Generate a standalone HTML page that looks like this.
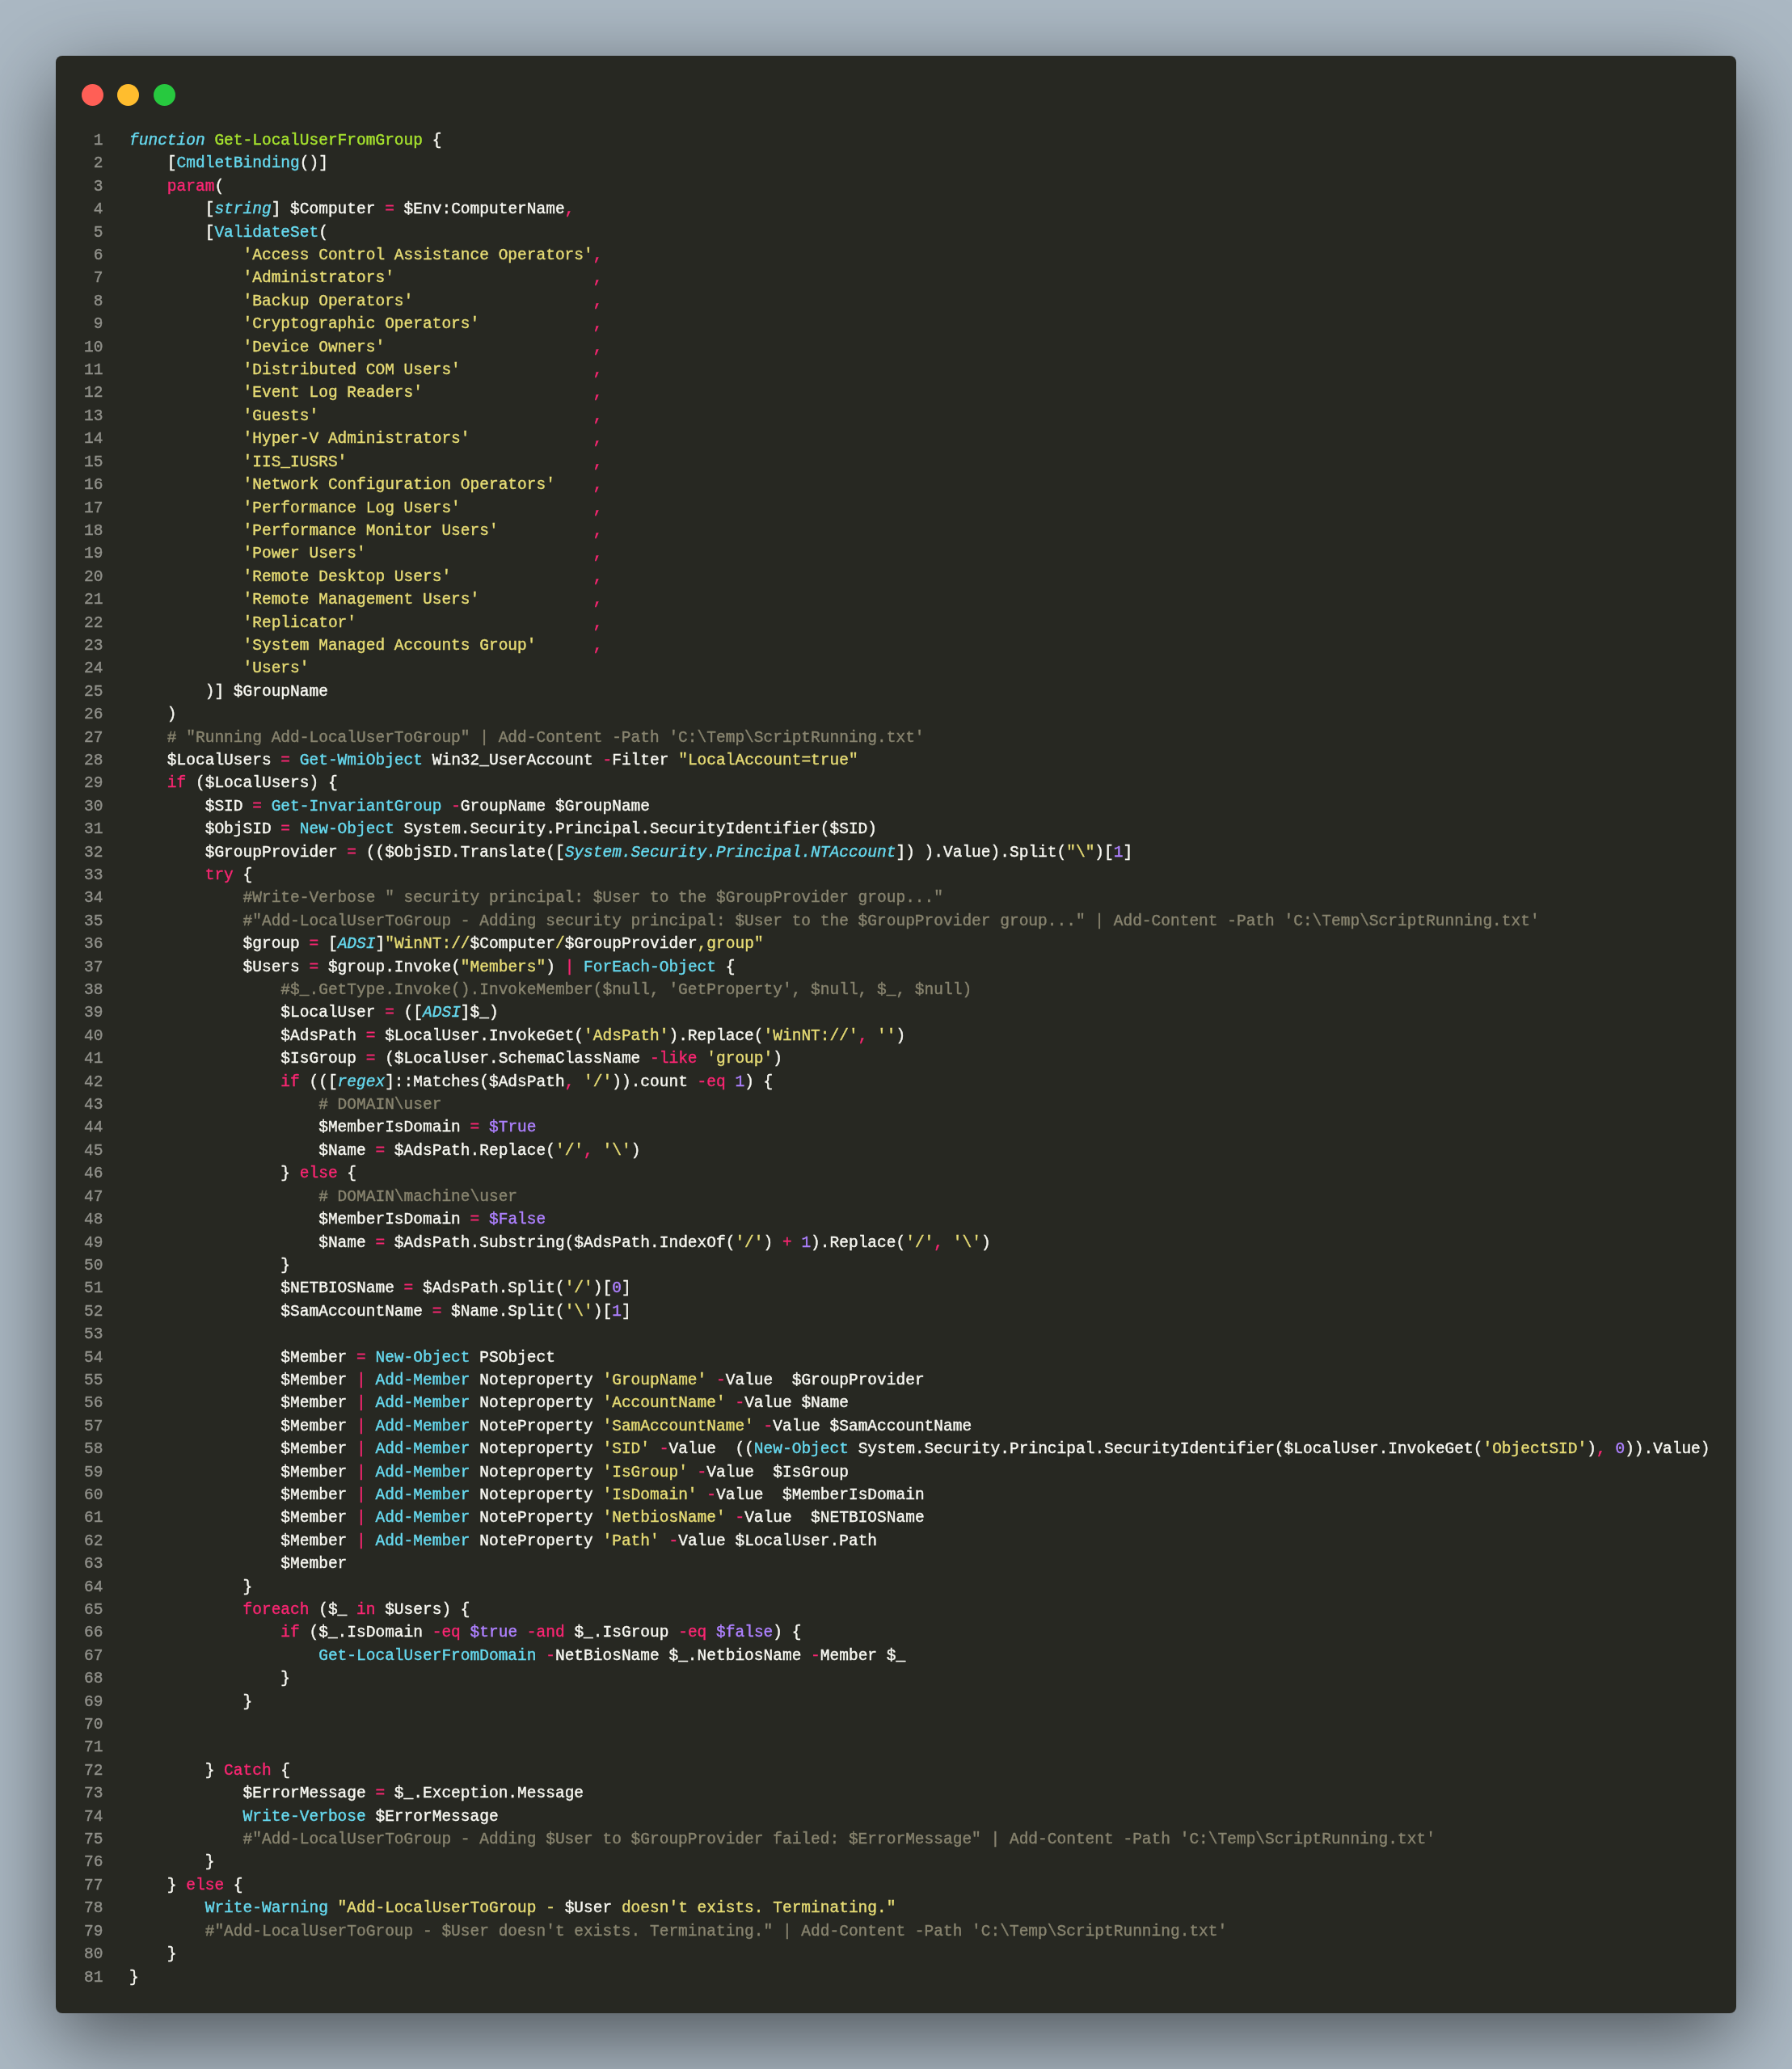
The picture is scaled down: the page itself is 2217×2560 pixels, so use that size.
<!DOCTYPE html>
<html><head><meta charset="utf-8">
<style>
html,body{margin:0;padding:0;}
body{width:2217px;height:2560px;background:#abb8c3;position:relative;overflow:hidden;}
.win{position:absolute;left:69px;top:69px;width:2079px;height:2421.5px;background:#272822;border-radius:8px;box-shadow:0 30px 103px rgba(0,0,0,0.55);}
.dot{position:absolute;top:104.2px;width:27px;height:27px;border-radius:50%;}
.d1{left:101px;background:#ff5f56;}
.d2{left:145px;background:#ffbd2e;}
.d3{left:189.7px;background:#27c93f;}
pre{margin:0;position:absolute;font-family:"Liberation Mono",monospace;font-size:19.514px;line-height:28.407px;white-space:pre;}
.code{left:159.9px;top:159.7px;color:#f8f8f2;}
.nums{right:calc(2217px - 127.5px);top:159.7px;color:#90908a;text-align:right;}
b{font-weight:normal;}
pre{will-change:transform;-webkit-text-stroke:0.4px currentColor;letter-spacing:0.007px;}
.p{color:#f92672}.c{color:#66d9ef}.ci{color:#66d9ef;font-style:italic}.g{color:#a6e22e}.y{color:#e6db74}.m{color:#ae81ff}.cm{color:#88846f}
</style></head><body>
<div class="win"></div>
<div class="dot d1"></div><div class="dot d2"></div><div class="dot d3"></div>
<pre class="nums">1
2
3
4
5
6
7
8
9
10
11
12
13
14
15
16
17
18
19
20
21
22
23
24
25
26
27
28
29
30
31
32
33
34
35
36
37
38
39
40
41
42
43
44
45
46
47
48
49
50
51
52
53
54
55
56
57
58
59
60
61
62
63
64
65
66
67
68
69
70
71
72
73
74
75
76
77
78
79
80
81</pre>
<pre class="code"><b class="ci">function</b> <b class="g">Get-LocalUserFromGroup</b> {
    [<b class="c">CmdletBinding</b>()]
    <b class="p">param</b>(
        [<b class="ci">string</b>] $Computer <b class="p">=</b> $Env:ComputerName<b class="p">,</b>
        [<b class="c">ValidateSet</b>(
            <b class="y">'Access Control Assistance Operators'</b><b class="p">,</b>
            <b class="y">'Administrators'</b>                     <b class="p">,</b>
            <b class="y">'Backup Operators'</b>                   <b class="p">,</b>
            <b class="y">'Cryptographic Operators'</b>            <b class="p">,</b>
            <b class="y">'Device Owners'</b>                      <b class="p">,</b>
            <b class="y">'Distributed COM Users'</b>              <b class="p">,</b>
            <b class="y">'Event Log Readers'</b>                  <b class="p">,</b>
            <b class="y">'Guests'</b>                             <b class="p">,</b>
            <b class="y">'Hyper-V Administrators'</b>             <b class="p">,</b>
            <b class="y">'IIS_IUSRS'</b>                          <b class="p">,</b>
            <b class="y">'Network Configuration Operators'</b>    <b class="p">,</b>
            <b class="y">'Performance Log Users'</b>              <b class="p">,</b>
            <b class="y">'Performance Monitor Users'</b>          <b class="p">,</b>
            <b class="y">'Power Users'</b>                        <b class="p">,</b>
            <b class="y">'Remote Desktop Users'</b>               <b class="p">,</b>
            <b class="y">'Remote Management Users'</b>            <b class="p">,</b>
            <b class="y">'Replicator'</b>                         <b class="p">,</b>
            <b class="y">'System Managed Accounts Group'</b>      <b class="p">,</b>
            <b class="y">'Users'</b>
        )] $GroupName
    )
    <b class="cm"># "Running Add-LocalUserToGroup" | Add-Content -Path 'C:\Temp\ScriptRunning.txt'</b>
    $LocalUsers <b class="p">=</b> <b class="c">Get-WmiObject</b> Win32_UserAccount <b class="p">-</b>Filter <b class="y">"LocalAccount=true"</b>
    <b class="p">if</b> ($LocalUsers) {
        $SID <b class="p">=</b> <b class="c">Get-InvariantGroup</b> <b class="p">-</b>GroupName $GroupName
        $ObjSID <b class="p">=</b> <b class="c">New-Object</b> System.Security.Principal.SecurityIdentifier($SID)
        $GroupProvider <b class="p">=</b> (($ObjSID.Translate([<b class="ci">System.Security.Principal.NTAccount</b>]) ).Value).Split(<b class="y">"\"</b>)[<b class="m">1</b>]
        <b class="p">try</b> {
            <b class="cm">#Write-Verbose " security principal: $User to the $GroupProvider group..."</b>
            <b class="cm">#"Add-LocalUserToGroup - Adding security principal: $User to the $GroupProvider group..." | Add-Content -Path 'C:\Temp\ScriptRunning.txt'</b>
            $group <b class="p">=</b> [<b class="ci">ADSI</b>]<b class="y">"WinNT://</b>$Computer<b class="y">/</b>$GroupProvider<b class="y">,group"</b>
            $Users <b class="p">=</b> $group.Invoke(<b class="y">"Members"</b>) <b class="p">|</b> <b class="c">ForEach-Object</b> {
                <b class="cm">#$_.GetType.Invoke().InvokeMember($null, 'GetProperty', $null, $_, $null)</b>
                $LocalUser <b class="p">=</b> ([<b class="ci">ADSI</b>]$_)
                $AdsPath <b class="p">=</b> $LocalUser.InvokeGet(<b class="y">'AdsPath'</b>).Replace(<b class="y">'WinNT://'</b><b class="p">,</b> <b class="y">''</b>)
                $IsGroup <b class="p">=</b> ($LocalUser.SchemaClassName <b class="p">-like</b> <b class="y">'group'</b>)
                <b class="p">if</b> (([<b class="ci">regex</b>]::Matches($AdsPath<b class="p">,</b> <b class="y">'/'</b>)).count <b class="p">-eq</b> <b class="m">1</b>) {
                    <b class="cm"># DOMAIN\user</b>
                    $MemberIsDomain <b class="p">=</b> <b class="m">$True</b>
                    $Name <b class="p">=</b> $AdsPath.Replace(<b class="y">'/'</b><b class="p">,</b> <b class="y">'\'</b>)
                } <b class="p">else</b> {
                    <b class="cm"># DOMAIN\machine\user</b>
                    $MemberIsDomain <b class="p">=</b> <b class="m">$False</b>
                    $Name <b class="p">=</b> $AdsPath.Substring($AdsPath.IndexOf(<b class="y">'/'</b>) <b class="p">+</b> <b class="m">1</b>).Replace(<b class="y">'/'</b><b class="p">,</b> <b class="y">'\'</b>)
                }
                $NETBIOSName <b class="p">=</b> $AdsPath.Split(<b class="y">'/'</b>)[<b class="m">0</b>]
                $SamAccountName <b class="p">=</b> $Name.Split(<b class="y">'\'</b>)[<b class="m">1</b>]

                $Member <b class="p">=</b> <b class="c">New-Object</b> PSObject
                $Member <b class="p">|</b> <b class="c">Add-Member</b> Noteproperty <b class="y">'GroupName'</b> <b class="p">-</b>Value  $GroupProvider
                $Member <b class="p">|</b> <b class="c">Add-Member</b> Noteproperty <b class="y">'AccountName'</b> <b class="p">-</b>Value $Name
                $Member <b class="p">|</b> <b class="c">Add-Member</b> NoteProperty <b class="y">'SamAccountName'</b> <b class="p">-</b>Value $SamAccountName
                $Member <b class="p">|</b> <b class="c">Add-Member</b> Noteproperty <b class="y">'SID'</b> <b class="p">-</b>Value  ((<b class="c">New-Object</b> System.Security.Principal.SecurityIdentifier($LocalUser.InvokeGet(<b class="y">'ObjectSID'</b>)<b class="p">,</b> <b class="m">0</b>)).Value)
                $Member <b class="p">|</b> <b class="c">Add-Member</b> Noteproperty <b class="y">'IsGroup'</b> <b class="p">-</b>Value  $IsGroup
                $Member <b class="p">|</b> <b class="c">Add-Member</b> Noteproperty <b class="y">'IsDomain'</b> <b class="p">-</b>Value  $MemberIsDomain
                $Member <b class="p">|</b> <b class="c">Add-Member</b> NoteProperty <b class="y">'NetbiosName'</b> <b class="p">-</b>Value  $NETBIOSName
                $Member <b class="p">|</b> <b class="c">Add-Member</b> NoteProperty <b class="y">'Path'</b> <b class="p">-</b>Value $LocalUser.Path
                $Member
            }
            <b class="p">foreach</b> ($_ <b class="p">in</b> $Users) {
                <b class="p">if</b> ($_.IsDomain <b class="p">-eq</b> <b class="m">$true</b> <b class="p">-and</b> $_.IsGroup <b class="p">-eq</b> <b class="m">$false</b>) {
                    <b class="c">Get-LocalUserFromDomain</b> <b class="p">-</b>NetBiosName $_.NetbiosName <b class="p">-</b>Member $_
                }
            }


        } <b class="p">Catch</b> {
            $ErrorMessage <b class="p">=</b> $_.Exception.Message
            <b class="c">Write-Verbose</b> $ErrorMessage
            <b class="cm">#"Add-LocalUserToGroup - Adding $User to $GroupProvider failed: $ErrorMessage" | Add-Content -Path 'C:\Temp\ScriptRunning.txt'</b>
        }
    } <b class="p">else</b> {
        <b class="c">Write-Warning</b> <b class="y">"Add-LocalUserToGroup - </b>$User<b class="y"> doesn't exists. Terminating."</b>
        <b class="cm">#"Add-LocalUserToGroup - $User doesn't exists. Terminating." | Add-Content -Path 'C:\Temp\ScriptRunning.txt'</b>
    }
}</pre>
</body></html>
